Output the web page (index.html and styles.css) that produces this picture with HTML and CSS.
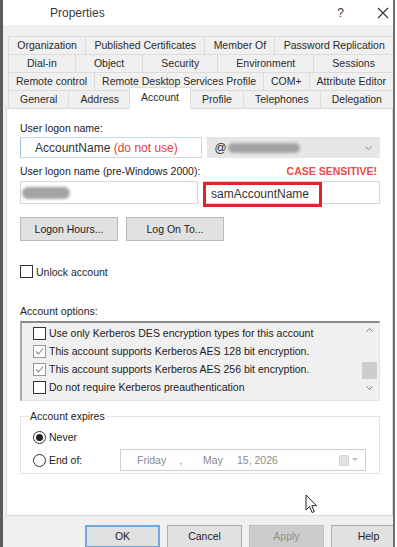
FILE: index.html
```html
<!DOCTYPE html>
<html>
<head>
<meta charset="utf-8">
<link rel="stylesheet" href="styles.css">
</head>
<body>
<div class="window">
  <div class="titlebar">
    <span class="title">Properties</span>
    <span class="help">?</span>
    <svg class="close" width="12" height="12" viewBox="0 0 12 12"><path d="M1 1L11 11M11 1L1 11" stroke="#333" stroke-width="1.1" fill="none"/></svg>
  </div>
  <div class="body">
    <div class="tabs">
      <div class="tabrow">
        <div class="tab">Organization</div>
        <div class="tab">Published Certificates</div>
        <div class="tab">Member Of</div>
        <div class="tab">Password Replication</div>
      </div>
      <div class="tabrow">
        <div class="tab">Dial-in</div>
        <div class="tab">Object</div>
        <div class="tab">Security</div>
        <div class="tab">Environment</div>
        <div class="tab">Sessions</div>
      </div>
      <div class="tabrow">
        <div class="tab">Remote control</div>
        <div class="tab">Remote Desktop Services Profile</div>
        <div class="tab">COM+</div>
        <div class="tab">Attribute Editor</div>
      </div>
      <div class="tabrow front">
        <div class="tab">General</div>
        <div class="tab">Address</div>
        <div class="tab selected">Account</div>
        <div class="tab">Profile</div>
        <div class="tab">Telephones</div>
        <div class="tab">Delegation</div>
      </div>
    </div>
    <div class="panel">
      <div class="label first">User logon name:</div>
      <div class="fieldrow r1">
        <div class="input upn"><span class="big">AccountName <span class="red">(do not use)</span></span></div>
        <div class="combo"><span class="big">@</span><span class="blob wide"></span><svg class="chev" width="7" height="4" viewBox="0 0 7 4"><path d="M0.5 0.5L3.5 3.5L6.5 0.5" stroke="#888" fill="none"/></svg></div>
      </div>
      <div class="labelrow">
        <span class="label">User logon name (pre-Windows 2000):</span>
        <span class="case">CASE SENSITIVE!</span>
      </div>
      <div class="fieldrow r2">
        <div class="input plain"><span class="blob small"></span></div>
        <div class="input plain sam"><span class="redbox big">samAccountName</span></div>
      </div>
      <div class="btnrow">
        <div class="btn">Logon Hours...</div>
        <div class="btn">Log On To...</div>
      </div>
      <div class="check unlock"><span class="box"></span><span class="label">Unlock account</span></div>
      <div class="label options">Account options:</div>
      <div class="listbox">
        <div class="items">
          <div class="item"><span class="box"></span>Use only Kerberos DES encryption types for this account</div>
          <div class="item"><span class="box on"><svg width="11" height="11" viewBox="0 0 11 11"><path d="M2 5.5L4.5 8L9 2.5" stroke="#8a8a8a" stroke-width="1.1" fill="none"/></svg></span>This account supports Kerberos AES 128 bit encryption.</div>
          <div class="item"><span class="box on"><svg width="11" height="11" viewBox="0 0 11 11"><path d="M2 5.5L4.5 8L9 2.5" stroke="#8a8a8a" stroke-width="1.1" fill="none"/></svg></span>This account supports Kerberos AES 256 bit encryption.</div>
          <div class="item"><span class="box"></span>Do not require Kerberos preauthentication</div>
        </div>
        <div class="scrollbar">
          <svg width="7" height="4" viewBox="0 0 7 4"><path d="M0.5 3.5L3.5 0.5L6.5 3.5" stroke="#777" fill="none"/></svg>
          <div class="thumb"></div>
          <svg width="7" height="4" viewBox="0 0 7 4"><path d="M0.5 0.5L3.5 3.5L6.5 0.5" stroke="#777" fill="none"/></svg>
        </div>
      </div>
      <fieldset class="group">
        <legend>Account expires</legend>
        <div class="radio r-never"><span class="circle on"></span>Never</div>
        <div class="radio r-end">
          <span class="circle"></span><span class="endlabel">End of:</span>
          <div class="date">
            <span class="d1">Friday</span><span class="d2">,</span><span class="d3">May</span><span class="d4">15, 2026</span>
            <span class="cal"></span>
            <svg class="dchev" width="6" height="4" viewBox="0 0 6 4"><path d="M0 0H6L3 3Z" fill="#bbb"/></svg>
          </div>
        </div>
      </fieldset>
      <svg class="cursor" width="14" height="21" viewBox="0 0 14 21"><path d="M1 1V16L4.5 12.5L7 18.5L9.3 17.5L6.8 11.7H11.5Z" fill="#fff" stroke="#222" stroke-width="1" stroke-linejoin="round"/></svg>
    </div>
    <div class="footer">
      <div class="fbtn ok">OK</div>
      <div class="fbtn">Cancel</div>
      <div class="fbtn disabled">Apply</div>
      <div class="fbtn">Help</div>
    </div>
  </div>
</div>
</body>
</html>
```

FILE: styles.css
```css
html, body {
  margin: 0;
  padding: 0;
  background: #ffffff;
}
body {
  font-family: "Liberation Sans", Arial, sans-serif;
  font-size: 10.5px;
  color: #222;
}
.window {
  width: 390px;
  height: 547px;
  border-left: 3px solid #5c5c5c;
  border-right: 2px solid #6e6e6e;
  overflow: hidden;
  display: flex;
  flex-direction: column;
}
.titlebar {
  height: 25px;
  background: #fff;
  display: flex;
  align-items: center;
  flex: none;
}
.title {
  font-size: 12px;
  color: #3a3a3a;
  margin-left: 47px;
}
.help {
  margin-left: auto;
  font-size: 12px;
  color: #333;
}
.close {
  margin-left: 33px;
  margin-right: 4px;
}
.body {
  flex: 1;
  background: #f0f0f0;
  display: flex;
  flex-direction: column;
  padding-top: 11px;
}
.tabs {
  margin-left: 5px;
}
.tabrow {
  display: flex;
  height: 18px;
}
.tab {
  flex: 1 1 auto;
  text-align: center;
  line-height: 17px;
  white-space: nowrap;
  color: #2a2a2a;
  border-top: 1px solid #dcdcdc;
  border-left: 1px solid #dcdcdc;
  background: #f0f0f0;
}
.tabrow.front {
  align-items: stretch;
}
.tab.selected {
  background: #fff;
  margin: -3px -1px -1px -1px;
  line-height: 19px;
  position: relative;
  z-index: 1;
  border: 1px solid #dcdcdc;
  border-bottom: none;
}
.panel {
  position: relative;
  margin-left: 3px;
  height: 406px;
  background: #fff;
  border: 1px solid #d9d9d9;
  padding: 0 12px 0 13px;
  flex: none;
}
.label {
  line-height: 14px;
  color: #222;
}
.label.first {
  margin-top: 12px;
}
.fieldrow {
  display: flex;
  gap: 5px;
}
.fieldrow.r1 {
  margin-top: 2px;
  height: 21px;
}
.fieldrow.r2 {
  margin-top: 3px;
  height: 23px;
}
.big {
  font-size: 12px;
}
.red {
  color: #e8403e;
}
.input {
  flex: 1;
  box-sizing: border-box;
  background: #fff;
  display: flex;
  align-items: center;
  white-space: pre;
}
.input.upn {
  border: 1px solid #c7d9ea;
  border-left-color: #9cc0df;
  padding-left: 14px;
  color: #333;
}
.combo {
  flex: 1;
  background: #e6e6e6;
  display: flex;
  align-items: center;
  padding-left: 8px;
  color: #333;
}
.blob {
  display: block;
  background: #a3a3a3;
  border-radius: 6px;
  filter: blur(1.5px);
}
.blob.wide {
  width: 72px;
  height: 10px;
  margin-left: 1px;
}
.blob.small {
  width: 48px;
  height: 12px;
  margin-left: 1px;
}
.chev {
  margin-left: auto;
  margin-right: 8px;
}
.labelrow {
  display: flex;
  align-items: center;
  justify-content: space-between;
  margin-top: 6px;
  height: 14px;
}
.case {
  color: #ea4a4a;
  font-weight: bold;
  font-size: 10.5px;
  margin-right: 3px;
}
.input.plain {
  border: 1px solid #d6d6d6;
}
.input.sam {
  align-items: flex-start;
  border-left: none;
}
.redbox {
  display: block;
  box-sizing: border-box;
  width: 119px;
  height: 25px;
  border: 3px solid #e0242a;
  padding-left: 5px;
  line-height: 18px;
  color: #333;
}
.btnrow {
  display: flex;
  gap: 8px;
  margin-top: 13px;
}
.btn {
  width: 98px;
  height: 24px;
  box-sizing: border-box;
  background: #e1e1e1;
  border: 1px solid #b8b8b8;
  text-align: center;
  line-height: 22px;
  color: #222;
}
.check {
  display: flex;
  align-items: center;
}
.check.unlock {
  margin-top: 24px;
  height: 13px;
}
.box {
  width: 13px;
  height: 13px;
  box-sizing: border-box;
  border: 1px solid #333;
  background: #fff;
  margin-right: 3px;
  flex: none;
  display: flex;
  align-items: center;
  justify-content: center;
}
.box.on {
  border-color: #9a9a9a;
}
.label.options {
  margin-top: 26px;
}
.listbox {
  margin-top: 3px;
  height: 80px;
  box-sizing: border-box;
  background: #f0f0f0;
  border-top: 2px solid #8a8a8a;
  border-left: 2px solid #a6a6a6;
  border-right: 1px solid #e3e3e3;
  border-bottom: 1px solid #e3e3e3;
  display: flex;
}
.items {
  flex: 1;
  padding-top: 1px;
  padding-left: 11px;
}
.item {
  height: 18px;
  display: flex;
  align-items: center;
  color: #222;
}
.scrollbar {
  width: 17px;
  margin-right: 1px;
  display: flex;
  flex-direction: column;
  align-items: center;
  padding-top: 5px;
}
.thumb {
  width: 15px;
  height: 17px;
  background: #cdcdcd;
  margin-top: 30px;
  margin-bottom: 7px;
}
.group {
  margin: 8px 0 0 0;
  padding: 0 0 0 12px;
  height: 65px;
  box-sizing: border-box;
  border: 1px solid #e3e3e3;
}
.group legend {
  padding: 0 1px;
  margin-left: -4px;
  line-height: 14px;
  color: #222;
}
.radio {
  display: flex;
  align-items: center;
}
.r-never {
  margin-top: 7px;
  height: 14px;
}
.r-end {
  margin-top: 5px;
  height: 22px;
}
.circle {
  width: 13px;
  height: 13px;
  box-sizing: border-box;
  border: 1px solid #333;
  border-radius: 50%;
  margin-right: 3px;
  display: flex;
  align-items: center;
  justify-content: center;
  background: #fff;
}
.circle.on::after {
  content: "";
  width: 7px;
  height: 7px;
  border-radius: 50%;
  background: #222;
}
.endlabel {
  width: 71px;
}
.date {
  width: 246px;
  height: 22px;
  box-sizing: border-box;
  border: 1px solid #cfcfcf;
  display: flex;
  align-items: center;
  color: #8a8a8a;
  font-size: 10.5px;
}
.d1 { margin-left: 16px; }
.d2 { margin-left: 13px; }
.d3 { margin-left: 21px; }
.d4 { margin-left: 14px; }
.cal {
  margin-left: auto;
  width: 8px;
  height: 9px;
  border-radius: 1px;
  background: #e2e2e2;
  border: 1px solid #d4d4d4;
}
.dchev {
  margin: 0 7px 0 3px;
}
.cursor {
  position: absolute;
  left: 298px;
  top: 385px;
}
.footer {
  display: flex;
  gap: 7px;
  padding: 9px 0 0 82px;
}
.fbtn {
  flex: none;
  width: 75px;
  height: 23px;
  box-sizing: border-box;
  background: #e1e1e1;
  border: 1px solid #adadad;
  text-align: center;
  line-height: 21px;
  color: #222;
}
.fbtn.ok {
  border: 2px solid #6fa8dc;
  line-height: 19px;
}
.fbtn.disabled {
  background: #cccccc;
  border-color: #bfbfbf;
  color: #8f8f8f;
}
```
